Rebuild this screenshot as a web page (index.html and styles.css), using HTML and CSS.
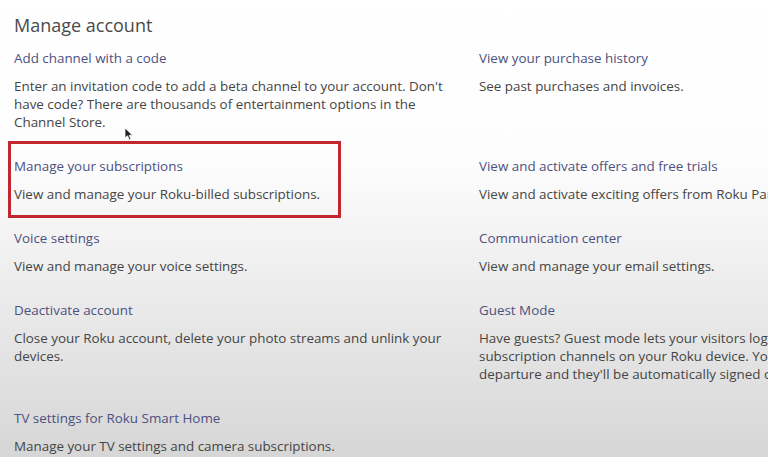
FILE: index.html
```html
<!DOCTYPE html>
<html>
<head>
    <title>Manage account</title>
    <link rel="stylesheet" href="styles.css">
</head>
<body>
    <div class="page">
        <h1 class="page-title">Manage account</h1>
        <div class="options">
            <div class="option">
                <a class="option-link">Add channel with a code</a>
                <p class="option-desc">Enter an invitation code to add a beta channel to your account. Don't have code? There are thousands of entertainment options in the Channel Store.</p>
                <svg class="cursor" width="10" height="14" viewBox="0 0 10 14">
                    <path d="M1 1 L1 11 L3.5 8.8 L5.4 13 L7 12.3 L5.2 8.2 L8.6 8.2 Z" fill="#222" stroke="#fff" stroke-width="0.8"/>
                </svg>
            </div>
            <div class="option">
                <a class="option-link">View your purchase history</a>
                <p class="option-desc">See past purchases and invoices.</p>
            </div>

            <div class="option">
                <div class="highlight"></div>
                <a class="option-link">Manage your subscriptions</a>
                <p class="option-desc">View and manage your Roku-billed subscriptions.</p>
            </div>
            <div class="option">
                <a class="option-link">View and activate offers and free trials</a>
                <p class="option-desc">View and activate exciting offers from Roku Partners.</p>
            </div>

            <div class="option">
                <a class="option-link">Voice settings</a>
                <p class="option-desc">View and manage your voice settings.</p>
            </div>
            <div class="option">
                <a class="option-link">Communication center</a>
                <p class="option-desc">View and manage your email settings.</p>
            </div>

            <div class="option">
                <a class="option-link">Deactivate account</a>
                <p class="option-desc">Close your Roku account, delete your photo streams and unlink your devices.</p>
            </div>
            <div class="option">
                <a class="option-link">Guest Mode</a>
                <p class="option-desc">Have guests? Guest mode lets your visitors log in to their subscription channels on your Roku device. You set their departure and they'll be automatically signed out.</p>
            </div>

            <div class="option">
                <a class="option-link">TV settings for Roku Smart Home</a>
                <p class="option-desc">Manage your TV settings and camera subscriptions.</p>
            </div>
        </div>
    </div>
</body>
</html>
```

FILE: styles.css
```css
html, body {
    margin: 0;
    height: 100%;
}

body {
    background: linear-gradient(180deg, #ffffff 0%, #fdfdfd 35%, #ebebeb 65%, #d6d6d6 100%);
    font-family: 'Open Sans', 'Liberation Sans', sans-serif;
    overflow: hidden;
}

.page {
    padding: 13px 0 0 14px;
    width: 960px;
}

.page-title {
    margin: 0 0 12px;
    font-size: 18px;
    line-height: 24px;
    font-weight: 400;
    color: #4a4a4a;
}

.options {
    display: grid;
    grid-template-columns: 440px 380px;
    column-gap: 25px;
    row-gap: 26px;
}

.option {
    position: relative;
}

.option-link {
    display: block;
    font-size: 13.4px;
    line-height: 18px;
    color: #4d5180;
}

.option-desc {
    margin: 10px 0 0;
    font-size: 13.4px;
    line-height: 18px;
    color: #454545;
}

/* red box drawn over the video frame */
.highlight {
    position: absolute;
    top: -16px;
    left: -6px;
    width: 327px;
    height: 71px;
    border: 3px solid #c3262e;
    pointer-events: none;
}

.cursor {
    position: absolute;
    top: 78px;
    left: 110px;
}
```
